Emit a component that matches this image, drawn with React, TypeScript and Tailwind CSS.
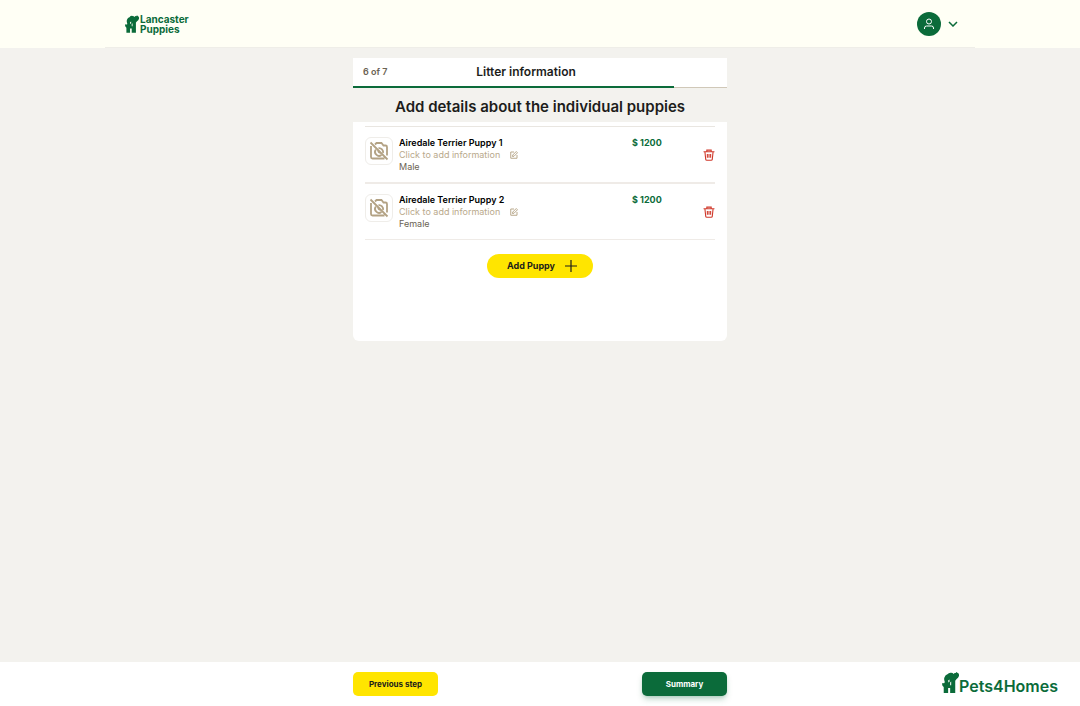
import { useState } from "react";

type Puppy = {
  id: number;
  name: string;
  sex: string;
  price: number;
};

const initialPuppies: Puppy[] = [
  { id: 1, name: "Airedale Terrier Puppy 1", sex: "Male", price: 1200 },
  { id: 2, name: "Airedale Terrier Puppy 2", sex: "Female", price: 1200 },
];

const STEP = 6;
const TOTAL_STEPS = 7;

function DogsMark({ className }: { className?: string }) {
  return (
    <svg viewBox="0 0 50 62" fill="currentColor" className={className} aria-hidden>
      <path
        fillRule="evenodd"
        d="M5 62V44Q0 42 0 35Q1 31 5 33Q8 34 8 29Q5 22 7 16Q10 8 16 7Q20 1 27 2Q32 2 34 6Q36 2 40 3L43 0Q45 3 48 4Q51 7 50 12Q48 18 43 21L39 26V62H24V47H18V62ZM18 25L22 22L22 29L19 31ZM24 31L27 28V39H24Z"
      />
    </svg>
  );
}

function NoPhotoIcon() {
  return (
    <svg viewBox="0 0 20 20" fill="none" stroke="currentColor" strokeWidth="1.8" className="size-5" aria-hidden>
      <path d="M1.5 1.5L18.5 18.5M2 5V16Q2 17.5 3.500 17.5H15.5M6 3.500L7.500 2H12.500L14.500 4.500H16.500Q18 4.500 18 6V14.500" />
      <path d="M6.800 8.500A4 4 0 0 0 12.500 14M9.500 7.200A4 4 0 0 1 14 12" />
      <path d="M9.500 9.500A1.500 1.500 0 0 0 11.500 11.500" />
    </svg>
  );
}

function EditIcon() {
  return (
    <svg viewBox="0 0 16 16" fill="none" stroke="currentColor" strokeWidth="2" className="size-2" aria-hidden>
      <path d="M8 2H1.500V14.500H14V8" />
      <path d="M5 11L5.500 8L12.500 1L15 3.500L8 10.500Z" />
    </svg>
  );
}

function TrashIcon() {
  return (
    <svg viewBox="0 0 20 22" fill="none" stroke="currentColor" strokeWidth="2" className="size-3" aria-hidden>
      <path d="M0 5H20M6 5V2H14V5M2.500 5L4 19Q4.200 20.500 6 20.500H14Q15.800 20.500 16 19L17.500 5" />
      <path d="M7 9V16M10 9V16M13 9V16" />
    </svg>
  );
}

function Header() {
  return (
    <header className="bg-[#fffff5]">
      <div className="mx-auto flex h-12 max-w-[870px] items-center justify-between border-b border-[#efeee8] pr-[17px] pl-5">
        <a href="#" className="flex items-center gap-px text-[#0b6b3a]">
          <DogsMark className="h-[18px] w-[14px]" />
          <span className="flex flex-col text-[10px] font-bold leading-[10px]">
            <span>Lancaster</span>
            <span>Puppies</span>
          </span>
        </a>
        <button type="button" aria-label="Account menu" className="flex items-center gap-[7px] text-[#0b6b3a]">
          <span className="flex size-6 items-center justify-center rounded-full bg-[#0b6b3a] text-white">
            <svg viewBox="0 0 12 12" fill="none" stroke="currentColor" className="size-3" aria-hidden>
              <circle cx="6" cy="3.500" r="2.500" />
              <path d="M1.500 11V10Q1.500 8 3.500 8H8.500Q10.500 8 10.500 10V11" />
            </svg>
          </span>
          <svg viewBox="0 0 10 6" fill="none" stroke="currentColor" strokeWidth="1.500" className="h-1.5 w-2.5" aria-hidden>
            <path d="M1 1L5 5L9 1" />
          </svg>
        </button>
      </div>
    </header>
  );
}

function PuppyRow({ puppy, onRemove }: { puppy: Puppy; onRemove: () => void }) {
  return (
    <li className="flex border-b-2 border-[#efebe7] pt-2.5 pb-[9px] last:border-b">
      <div className="flex size-7 shrink-0 items-center justify-center rounded-md border border-[#efede9] text-[#b3a284]">
        <NoPhotoIcon />
      </div>
      <div className="ml-1.5 flex-1 text-[9px] leading-3">
        <h2 className="font-semibold text-black">{puppy.name}</h2>
        <button type="button" className="flex items-center gap-2.5 text-[#b9a98c]">
          Click to add information
          <EditIcon />
        </button>
        <p className="text-[#6b6354]">{puppy.sex}</p>
      </div>
      <p className="w-[71px] text-[9px] font-bold leading-3 text-[#0b6b3a]">$ {puppy.price}</p>
      <button
        type="button"
        aria-label={`Remove ${puppy.name}`}
        onClick={onRemove}
        className="self-center text-[#d0392b]"
      >
        <TrashIcon />
      </button>
    </li>
  );
}

export default function App() {
  const [puppies, setPuppies] = useState(initialPuppies);

  const addPuppy = () => {
    const id = Math.max(0, ...puppies.map((p) => p.id)) + 1;
    setPuppies([...puppies, { id, name: `Airedale Terrier Puppy ${id}`, sex: "Male", price: 1200 }]);
  };

  return (
    <div className="flex min-h-screen flex-col bg-[#f3f2ee] font-['Inter',sans-serif] text-[#1d1d1b]">
      <Header />

      <main className="mx-auto w-full max-w-[374px] flex-1 pt-2.5">
        {/* Step title and progress */}
        <div className="bg-white">
          <div className="grid h-7 grid-cols-[1fr_auto_1fr] items-center pr-[38px] pl-2.5">
            <span className="text-[9px] font-semibold text-[#6b6354]">
              {STEP} of {TOTAL_STEPS}
            </span>
            <p className="text-xs font-semibold">Litter information</p>
          </div>
          <div className="h-0.5 border-b border-[#d0c8b8]">
            <div className="h-0.5 bg-[#0b6b3a]" style={{ width: `${(STEP / TOTAL_STEPS) * 100}%` }} />
          </div>
        </div>

        <h1 className="pt-2.5 pb-1.5 text-center text-[15px] font-semibold leading-[18px]">
          Add details about the individual puppies
        </h1>

        <section className="min-h-[219px] rounded-b-md bg-white px-3 pt-1">
          <ul className="border-t border-[#e9e6e1]">
            {puppies.map((p) => (
              <PuppyRow
                key={p.id}
                puppy={p}
                onRemove={() => setPuppies(puppies.filter((other) => other.id !== p.id))}
              />
            ))}
          </ul>
          <button
            type="button"
            onClick={addPuppy}
            className="mx-auto mt-3.5 flex h-6 items-center gap-2.5 rounded-full bg-[#ffe500] pr-4 pl-5 text-[9px] font-bold"
          >
            Add Puppy
            <svg viewBox="0 0 12 12" fill="none" stroke="currentColor" strokeWidth="1.200" className="size-3" aria-hidden>
              <path d="M6 0V12M0 6H12" />
            </svg>
          </button>
        </section>
      </main>

      <footer className="grid h-11 grid-cols-[1fr_374px_1fr] items-center bg-white">
        <div className="col-start-2 flex justify-between text-[8px] font-bold">
          <button type="button" className="h-6 w-[85px] rounded-[5px] bg-[#ffe500]">
            Previous step
          </button>
          <button type="button" className="h-6 w-[85px] rounded-[5px] bg-[#0b6b3a] text-white shadow-md shadow-[#0b6b3a]/25">
            Summary
          </button>
        </div>
        <a href="#" className="mr-[22px] flex items-center justify-self-end pb-1 text-[#0b6b3a]">
          <DogsMark className="h-[21px] w-[17px]" />
          <span className="pt-2 text-base font-semibold leading-4">Pets4Homes</span>
        </a>
      </footer>
    </div>
  );
}
